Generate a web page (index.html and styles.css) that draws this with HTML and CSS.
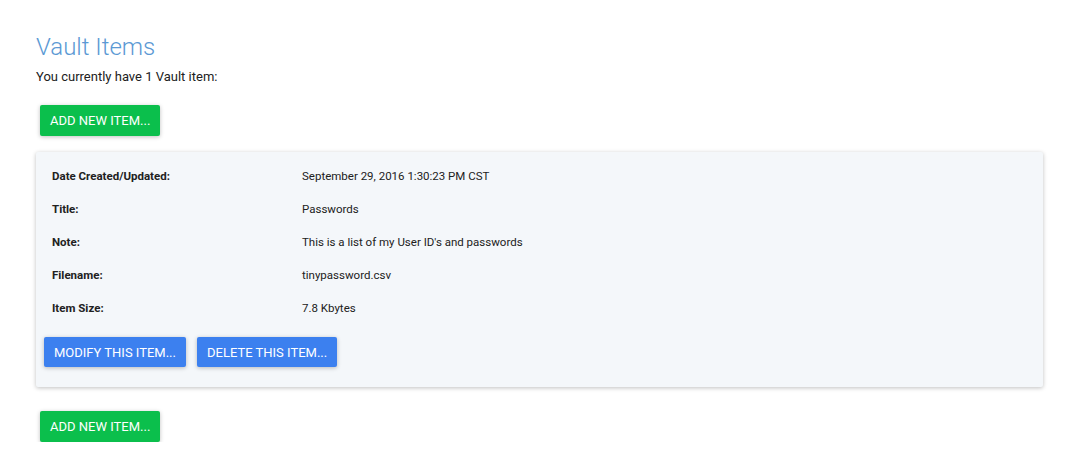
FILE: index.html
```html
<!DOCTYPE html>
<html>
<head>
<meta charset="utf-8">
<link rel="stylesheet" href="styles.css">
</head>
<body>
<div class="page">
  <h1 class="title">Vault Items</h1>
  <p class="subtitle">You currently have 1 Vault item:</p>
  <div class="actions">
    <button class="btn btn-green">ADD NEW ITEM...</button>
  </div>
  <div class="card">
    <div class="row"><div class="label">Date Created/Updated:</div><div class="value">September 29, 2016 1:30:23 PM CST</div></div>
    <div class="row"><div class="label">Title:</div><div class="value">Passwords</div></div>
    <div class="row"><div class="label">Note:</div><div class="value">This is a list of my User ID's and passwords</div></div>
    <div class="row"><div class="label">Filename:</div><div class="value">tinypassword.csv</div></div>
    <div class="row"><div class="label">Item Size:</div><div class="value">7.8 Kbytes</div></div>
    <div class="card-actions">
      <button class="btn btn-blue">MODIFY THIS ITEM...</button>
      <button class="btn btn-blue">DELETE THIS ITEM...</button>
    </div>
  </div>
  <div class="actions bottom">
    <button class="btn btn-green">ADD NEW ITEM...</button>
  </div>
</div>
</body>
</html>
```

FILE: styles.css
```css
html, body {
  margin: 0;
  padding: 0;
  background: #ffffff;
}
body {
  font-family: Roboto, "Liberation Sans", sans-serif;
  color: #212121;
}
.page {
  padding: 31px 45px 0 36px;
}
.title {
  margin: 0;
  font-size: 24px;
  font-weight: 300;
  line-height: 32px;
  color: #5b99d4;
}
.subtitle {
  margin: 5px 0 0;
  font-size: 13px;
  line-height: 18px;
  color: #212121;
}
.actions {
  padding: 19px 4px 16px;
}
.actions.bottom {
  padding: 24px 4px 0;
}
.btn {
  font-family: Roboto, "Liberation Sans", sans-serif;
  font-size: 13px;
  font-weight: 400;
  color: #ffffff;
  border: none;
  border-radius: 2px;
  height: 31px;
  padding: 0 10px;
  box-shadow: 0 1px 4px rgba(0, 0, 0, 0.25);
  cursor: pointer;
}
.btn-green {
  background: #0bbf4c;
}
.btn-blue {
  background: #3c80ef;
  height: 30px;
}
.card {
  background: #f4f7fa;
  border-radius: 2px;
  box-shadow: 0 1px 4px rgba(0, 0, 0, 0.25);
  padding: 7px 8px 20px;
}
.row {
  display: flex;
  height: 33px;
  align-items: center;
  padding-left: 8px;
  font-size: 11.5px;
}
.label {
  width: 250px;
  font-weight: 700;
  color: #212121;
}
.value {
  color: #212121;
}
.card-actions {
  display: flex;
  gap: 11px;
  padding-top: 13px;
}
```
